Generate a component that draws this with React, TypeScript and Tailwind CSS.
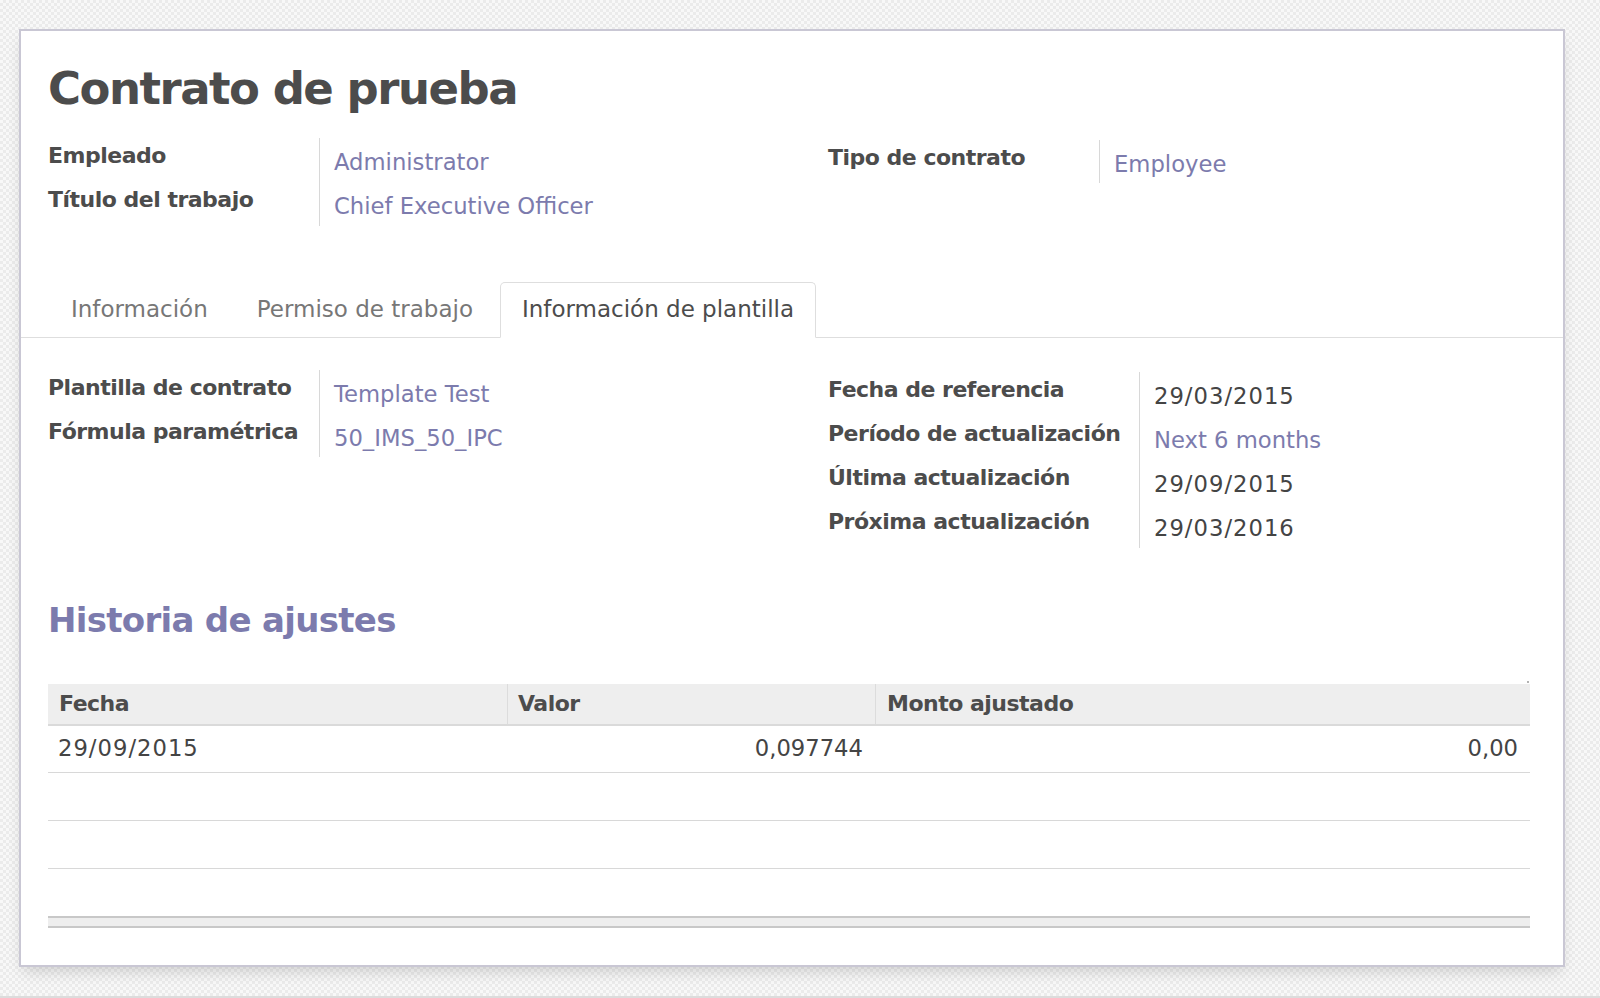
import React from "react";

type Row = { label: string; value: string; link?: boolean; mono?: boolean };

function Group({
  rows,
  labelW,
  lastH,
}: {
  rows: Row[];
  labelW: string;
  lastH: string;
}) {
  return (
    <div className="flex">
      <div className={`${labelW} shrink-0 border-r border-[#d8d8d8] pt-[4px]`}>
        {rows.map((r, i) => (
          <div
            key={r.label}
            className={`${i === rows.length - 1 ? lastH : "h-[44px]"} whitespace-nowrap text-[22px] font-bold leading-[28px] tracking-[-0.5px] text-[#4c4c4c]`}
          >
            {r.label}
          </div>
        ))}
      </div>
      <div className="pl-[14px] pt-[4px]">
        {rows.map((r, i) => (
          <div
            key={r.label}
            className={`${i === rows.length - 1 ? lastH : "h-[44px]"} whitespace-nowrap pt-[6px] text-[22.7px] leading-[28px] ${
              r.link ? "text-[#7c7bad]" : "text-[#444444]"
            } ${r.mono ? "tracking-[1px]" : ""}`}
          >
            {r.value}
          </div>
        ))}
      </div>
    </div>
  );
}

export default function App() {
  return (
    <div className="h-[998px] w-full border-b-2 border-[#dcdcdc] bg-[#f3f3f3] bg-[image:conic-gradient(#ebebeb_25%,#f8f8f8_0_50%,#ebebeb_0_75%,#f8f8f8_0)] bg-[length:6px_6px] pl-[19px] pt-[29px] font-['DejaVu_Sans','Verdana',sans-serif]">
      <div className="relative h-[938px] w-[1546px] border-2 border-[#c9c7d4] bg-white shadow-[0_8px_14px_-4px_rgba(0,0,0,0.16)]">
        <h1 className="ml-[27px] mt-[31px] text-[45px] font-bold leading-[54px] tracking-[-1.5px] text-[#4c4c4c]">
          Contrato de prueba
        </h1>

        <div className="mt-[22px] flex px-[27px]">
          <div className="w-[780px] shrink-0">
            <Group
              labelW="w-[272px]"
              lastH="h-[40px]"
              rows={[
                { label: "Empleado", value: "Administrator", link: true },
                { label: "Título del trabajo", value: "Chief Executive Officer", link: true },
              ]}
            />
          </div>
          <div className="mt-[2px]">
            <Group
              labelW="w-[272px]"
              lastH="h-[39px]"
              rows={[{ label: "Tipo de contrato", value: "Employee", link: true }]}
            />
          </div>
        </div>

        <div className="mt-[56px] flex items-end gap-[5px] border-b border-[#dedede] pl-[28px]">
          <div className="-mb-px rounded-t-[5px] border border-transparent px-[21px] pb-[14px] pt-[12px] text-[23px] leading-[28px] text-[#777777]">
            Información
          </div>
          <div className="-mb-px rounded-t-[5px] border border-transparent px-[21px] pb-[14px] pt-[12px] text-[23px] leading-[28px] text-[#777777]">
            Permiso de trabajo
          </div>
          <div className="-mb-px rounded-t-[5px] border border-[#dedede] border-b-white bg-white px-[21px] pb-[14px] pt-[12px] text-[23px] leading-[28px] text-[#4c4c4c]">
            Información de plantilla
          </div>
        </div>

        <div className="mt-[32px] flex px-[27px]">
          <div className="w-[780px] shrink-0">
            <Group
              labelW="w-[272px]"
              lastH="h-[39px]"
              rows={[
                { label: "Plantilla de contrato", value: "Template Test", link: true },
                { label: "Fórmula paramétrica", value: "50_IMS_50_IPC", link: true },
              ]}
            />
          </div>
          <div className="mt-[2px]">
            <Group
              labelW="w-[312px]"
              lastH="h-[40px]"
              rows={[
                { label: "Fecha de referencia", value: "29/03/2015", mono: true },
                { label: "Período de actualización", value: "Next 6 months", link: true },
                { label: "Última actualización", value: "29/09/2015", mono: true },
                { label: "Próxima actualización", value: "29/03/2016", mono: true },
              ]}
            />
          </div>
        </div>

        <h2 className="ml-[27px] mt-[52px] text-[34px] font-bold leading-[40px] tracking-[-0.7px] text-[#7c7bad]">
          Historia de ajustes
        </h2>

        <div className="ml-[27px] mt-[44px] w-[1482px]">
          <div className="grid h-[42px] grid-cols-[459px_368px_1fr] border-b-2 border-[#dadada] bg-[#eeeeee] text-[22px] font-bold leading-[28px] tracking-[-0.5px] text-[#4c4c4c]">
            <div className="pl-[11px] pt-[6px]">Fecha</div>
            <div className="border-l border-[#dcdcdc] pl-[10px] pt-[6px]">Valor</div>
            <div className="border-l border-[#dcdcdc] pl-[11px] pt-[6px]">Monto ajustado</div>
          </div>
          <div className="grid h-[47px] grid-cols-[459px_368px_1fr] border-b border-[#d8d8d8] text-[22.7px] leading-[28px] text-[#444444]">
            <div className="pl-[10px] pt-[8px] tracking-[1px]">29/09/2015</div>
            <div className="pr-[12px] pt-[8px] text-right">0,097744</div>
            <div className="pr-[12px] pt-[8px] text-right">0,00</div>
          </div>
          <div className="h-[48px] border-b border-[#d8d8d8]" />
          <div className="h-[48px] border-b border-[#d8d8d8]" />
          <div className="h-[47px]" />
          <div className="h-[12px] border-y-2 border-[#c8c8c8] bg-[#eeeeee]" />
        </div>

        <div className="absolute left-[1506px] top-[650px] h-[2px] w-[2px] rounded-full bg-[#9a9a9a]" />
      </div>
    </div>
  );
}
